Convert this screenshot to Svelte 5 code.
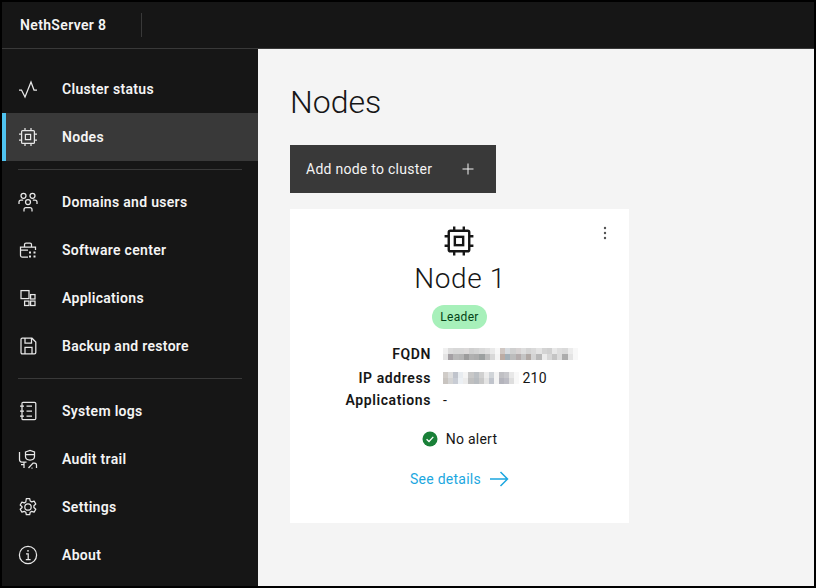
<script lang="ts">
  const topNav = [{ id: 'pulse', label: 'Cluster status' }, { id: 'chip', label: 'Nodes', active: true }];
  const midNav = [
    { id: 'users', label: 'Domains and users' },
    { id: 'store', label: 'Software center' },
    { id: 'apps', label: 'Applications' },
    { id: 'save', label: 'Backup and restore' },
  ];
  const lowNav = [
    { id: 'logs', label: 'System logs' },
    { id: 'audit', label: 'Audit trail' },
    { id: 'gear', label: 'Settings' },
    { id: 'info', label: 'About' },
  ];
  const groups = [topNav, midNav, lowNav];

  // pixelated redaction blocks, two rows of shades per masked value
  const fqdn = [
    ['#f0f0f0', '#dcdcdc', '#d8d8d8', '#d8d8d8', '#dcdada', '#d0d0d0', '#d4d4d4', '#dadada', '#e0e0e0', '#eaeaea', '#f8f8f8', '#d0c8c4', '#d8dce0', '#d0d0d0', '#d8d4d4', '#dedede', '#d4d4d4', '#dadada', '#e4e4e4', '#d4d4d4', '#d0d0d0', '#e8e8e8', '#dedede', '#dadada', '#ececec', '#f8f8f8'],
    ['#e4e4e4', '#a4a0a4', '#b8b8b8', '#b4b4b4', '#9c9c9c', '#b0b0b0', '#acacac', '#9ca0a0', '#bcbcbc', '#d8d8d8', '#f4f4f4', '#bcaca4', '#a4b0b8', '#bcbcbc', '#b4acac', '#c4c4c4', '#b0a8a4', '#d4d4d4', '#b8b8b8', '#ececec', '#d8d8d8', '#c4c4c4', '#dcdcdc', '#acacac', '#e4e4e4', '#f8f8f8'],
  ];
  const ip = [
    ['#d0ccc8', '#dedede', '#c0c4cc', '#e8ecf0', '#f4f4f4', '#c8c8c8', '#bcc0c4', '#d0d0d0', '#ececec', '#d0d4d8', '#f4f4f4', '#c0c0c4', '#c8c8cc', '#e8e8e8', '#f8f8f8'],
    ['#c8c4c0', '#d4d4d4', '#c8ccd4', '#ecf0f4', '#ececec', '#c0c0c0', '#b8bcc0', '#c8c8c8', '#e4e4e4', '#c0c4cc', '#f4f4f4', '#b4b4bc', '#bcbcc4', '#dedede', '#f8f8f8'],
  ];
</script>

{#snippet icon(id: string)}
  <svg class="ico" viewBox="0 0 20 20" fill="none" stroke="currentColor" stroke-width="1.25">
    {#if id === 'pulse'}
      <path d="M1 11h2.500L7 18 13 3l3 8h3"/>
    {:else if id === 'chip'}
      <rect x="3.600" y="3.600" width="12.800" height="12.800" rx="1"/>
      <rect x="7.400" y="7.400" width="5.200" height="5.200"/>
      <path d="M7 1v2.600M13 1v2.600M7 16.400V19M13 16.400V19M1 7h2.600M1 13h2.600M16.400 7H19M16.400 13H19"/>
    {:else if id === 'users'}
      <circle cx="5.500" cy="3.800" r="2.500"/><circle cx="14.500" cy="3.800" r="2.500"/><circle cx="10" cy="10" r="2.500"/>
      <path d="M1 12v-2c0-1.200.8-2 2-2h2.200M19 12v-2c0-1.200-.8-2-2-2h-2.200M6 19.500V17.500c0-1.200.8-2 2-2h4c1.200 0 2 .8 2 2v2"/>
    {:else if id === 'store'}
      <path d="M2.500 9.500V15.500c0 .9.600 1.500 1.500 1.500H10M2.500 9.500V7h15v3M6.500 7V4.500c0-.9.600-1.500 1.500-1.500h4c.9 0 1.500.6 1.500 1.500V7M2.500 10H10"/>
      <path d="M11 12.500h2M15.500 12.500h2M11 16.500h2M15.500 16.500h2" stroke-width="2"/>
    {:else if id === 'apps'}
      <rect x="3" y="2.600" width="8" height="8"/><rect x="12.600" y="6.600" width="4.400" height="4.400"/>
      <rect x="6.600" y="13.100" width="4.400" height="4.400"/><rect x="12.600" y="13.100" width="4.400" height="4.400"/>
    {:else if id === 'save'}
      <path d="M3 3.500c0-.8.500-1.300 1.300-1.300H14l3.800 3.800v10.500c0 .8-.5 1.300-1.300 1.300H4.300c-.8 0-1.300-.5-1.300-1.300zM7 2.200v5h6.500v-5M7 17.800v-6.400h7v6.400"/>
    {:else if id === 'logs'}
      <path d="M4 2.300c0-.6.400-1 1-1h11.500c.8 0 1.300.5 1.300 1.200v15c0 .7-.5 1.200-1.300 1.200H5c-.6 0-1-.4-1-1z"/>
      <path d="M2 5h4M2 10h4M2 15h4M8.500 5h5.500M8.500 10h5.500M8.500 15h5.500"/>
    {:else if id === 'audit'}
      <path d="M1.500 3v7.500c0 1.500.8 2.500 2.300 2.500h4.700"/>
      <path d="M7.500 3l4.500-1.500L16.500 3v4.500c0 2.200-2 3.500-4.500 3.500S7.500 9.700 7.500 7.500zM7.500 5.500h9"/>
      <path d="M6 13v6M3 15.500h3M10.500 19l4.500-5h1.500c1.300 0 2 .8 2 2v3M13.500 19h1"/>
    {:else if id === 'gear'}
      <path d="M8.300 1.500h3.400l.5 2.500 1.500.9 2.400-.8 1.700 2.900-1.900 1.700v1.800l1.900 1.700-1.700 2.900-2.400-.8-1.500.9-.5 2.500H8.300l-.5-2.500-1.500-.9-2.400.8-1.700-2.900 1.900-1.700V9.700L2.200 8 3.900 5.100l2.400.8 1.500-.9z" stroke-linejoin="round"/>
      <circle cx="10" cy="10" r="3.200"/>
    {:else if id === 'info'}
      <circle cx="10" cy="10" r="8.600"/>
      <path d="M8 8.800h2.200v5.500M7.800 14.600h4.800"/>
      <circle cx="10" cy="5.800" r=".9" fill="currentColor" stroke="none"/>
    {/if}
  </svg>
{/snippet}

<div class="screen">
  <header class="topbar">
    <span class="brand">NethServer 8</span>
    <span class="brand-sep"></span>
  </header>

  <div class="body">
    <nav class="side">
      {#each groups as group, i}
        {#if i > 0}<div class="side-sep"></div>{/if}
        <ul>
          {#each group as item}
            <li class="item" class:active={item.active}>
              {@render icon(item.id)}
              <span>{item.label}</span>
            </li>
          {/each}
        </ul>
      {/each}
    </nav>

    <main class="main">
      <h1>Nodes</h1>
      <button class="add">
        <span>Add node to cluster</span>
        <svg viewBox="0 0 16 16" width="16" height="16" fill="none" stroke="currentColor"><path d="M8 2.500v11M2.500 8h11"/></svg>
      </button>

      <section class="card">
        <svg class="kebab" viewBox="0 0 4 16" width="4" height="16" fill="#525252">
          <circle cx="2" cy="3" r="1.200"/><circle cx="2" cy="8" r="1.200"/><circle cx="2" cy="13" r="1.200"/>
        </svg>
        <svg class="chip" viewBox="0 0 20 20" fill="none" stroke="#161616" stroke-width="1.500">
          <rect x="3.600" y="3.600" width="12.800" height="12.800" rx="1"/>
          <rect x="7.400" y="7.400" width="5.200" height="5.200"/>
          <path d="M7 1v2.600M13 1v2.600M7 16.400V19M13 16.400V19M1 7h2.600M1 13h2.600M16.400 7H19M16.400 13H19"/>
        </svg>
        <h2>Node 1</h2>
        <span class="tag">Leader</span>

        <dl class="facts">
          <dt>FQDN</dt>
          <dd><span class="mask long">{#each fqdn as row}{#each row as c}<i style:background={c}></i>{/each}{/each}</span></dd>
          <dt class="ip">IP address</dt>
          <dd class="ip"><span class="mask short">{#each ip as row}{#each row as c}<i style:background={c}></i>{/each}{/each}</span>210</dd>
          <dt>Applications</dt>
          <dd>-</dd>
        </dl>

        <div class="alert">
          <svg viewBox="0 0 16 16" width="16" height="16">
            <circle cx="8" cy="8" r="7.500" fill="#198038"/>
            <path d="M4.600 8.200l2.400 2.300 4.300-4.600" fill="none" stroke="#fff" stroke-width="1.300"/>
          </svg>
          <span>No alert</span>
        </div>

        <a class="details" href="#details">
          <span>See details</span>
          <svg viewBox="0 0 20 20" width="20" height="20" fill="none" stroke="currentColor" stroke-width="1.500"><path d="M1 10h17.500M11.500 3l7 7-7 7"/></svg>
        </a>
      </section>
    </main>
  </div>
</div>

<style>
  :global(body) { margin: 0; background: #000; }
  .screen {
    box-sizing: border-box;
    width: 816px;
    height: 588px;
    border: 2px solid #000;
    display: flex;
    flex-direction: column;
    font-family: Roboto, "Liberation Sans", sans-serif;
    font-size: 14px;
    color: #161616;
    overflow: hidden;
  }
  .topbar {
    height: 47px;
    flex-shrink: 0;
    box-sizing: border-box;
    background: #161616;
    border-bottom: 1px solid #393939;
    display: flex;
    align-items: center;
    padding-left: 18px;
    color: #f4f4f4;
  }
  .brand { font-weight: 600; width: 121px; letter-spacing: .35px; }
  .brand-sep { width: 1px; height: 24px; background: #393939; }
  .body { flex: 1; display: flex; min-height: 0; }
  .side {
    width: 256px;
    flex-shrink: 0;
    background: #161616;
    padding-top: 16px;
    color: #f4f4f4;
  }
  ul { list-style: none; margin: 0; padding: 0; }
  .item {
    height: 48px;
    display: flex;
    align-items: center;
    gap: 24px;
    padding-left: 16px;
    font-weight: 600;
    letter-spacing: .3px;
  }
  .item.active {
    background: #393939;
    box-shadow: inset 4px 0 0 #4fc3f0;
  }
  .ico { width: 20px; height: 20px; flex-shrink: 0; color: #e8e8e8; }
  .side-sep { height: 1px; background: #393939; margin: 8px 16px; }
  .main { flex: 1; background: #f4f4f4; padding: 32px; min-width: 0; }
  h1 { margin: 0 0 24px; font-size: 32px; line-height: 42px; height: 40px; font-weight: 300; }
  .add {
    width: 206px;
    height: 48px;
    display: flex;
    align-items: center;
    justify-content: space-between;
    padding: 0 20px 0 16px;
    border: 0;
    background: #393939;
    color: #f4f4f4;
    font: inherit;
    letter-spacing: .26px;
  }
  .card {
    position: relative;
    box-sizing: border-box;
    width: 339px;
    height: 314px;
    margin-top: 16px;
    background: #fff;
    display: flex;
    flex-direction: column;
    align-items: center;
    padding-top: 16px;
  }
  .kebab { position: absolute; top: 16px; right: 22px; }
  .chip { width: 32px; height: 32px; margin-right: 1px; }
  h2 { margin: 4px 0 0; padding-left: 1px; font-size: 28px; line-height: 36px; font-weight: 300; letter-spacing: .6px; }
  .tag {
    margin-top: 8px;
    height: 24px;
    padding: 0 8px;
    display: flex;
    align-items: center;
    border-radius: 12px;
    background: #a7f0ba;
    color: #044317;
    font-size: 12px;
    letter-spacing: .32px;
  }
  .facts {
    align-self: flex-start;
    margin: 15px 0 0 55px;
    display: grid;
    grid-template-columns: 86px 1fr;
    column-gap: 12px;
    row-gap: 2px;
    line-height: 20px;
  }
  dt { font-weight: 600; text-align: right; letter-spacing: .6px; white-space: nowrap; }
  dd { margin: 0; display: flex; align-items: center; letter-spacing: .3px; }
  .ip { padding-top: 2px; }
  .mask { display: inline-grid; grid-template-rows: 6px 6px; filter: blur(.4px); }
  .mask.long { grid-template-columns: repeat(26, 5.200px); }
  .mask.short { grid-template-columns: repeat(15, 5.100px); margin-right: 3px; }
  .alert { margin-top: 21px; display: flex; align-items: center; gap: 8px; letter-spacing: .25px; }
  .details {
    margin-top: 22px;
    display: flex;
    align-items: center;
    gap: 8px;
    color: #1ca7e0;
    text-decoration: none;
    letter-spacing: .25px;
  }
</style>
